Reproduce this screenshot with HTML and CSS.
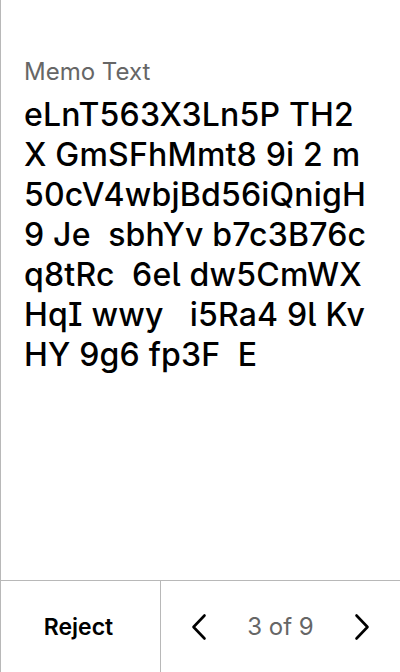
FILE: index.html
```html
<!DOCTYPE html>
<html>
<head>
<meta charset="utf-8">
<link rel="stylesheet" href="styles.css">
</head>
<body>
<div class="screen">
  <main class="content">
    <div class="label">Memo Text</div>
    <div class="memo">eLnT563X3Ln5P TH2 X GmSFhMmt8 9i 2 m 50cV4wbjBd56iQnigH 9 Je  sbhYv b7c3B76c q8tRc  6el dw5CmWX HqI wwy   i5Ra4 9l Kv HY 9g6 fp3F  E</div>
  </main>
  <footer class="bar">
    <div class="reject">Reject</div>
    <div class="pager">
      <span class="chev"><svg width="24" height="28" viewBox="0 0 24 28"><path d="M17.5 2.5 L6.5 14 L17.5 25.5" fill="none" stroke="#000" stroke-width="2.6" stroke-linecap="round" stroke-linejoin="round"/></svg></span>
      <span class="count">3 of 9</span>
      <span class="chev"><svg width="24" height="28" viewBox="0 0 24 28"><path d="M6.5 2.5 L17.5 14 L6.5 25.5" fill="none" stroke="#000" stroke-width="2.6" stroke-linecap="round" stroke-linejoin="round"/></svg></span>
    </div>
  </footer>
</div>
</body>
</html>
```
FILE: styles.css
```css
html, body {
  margin: 0;
  padding: 0;
  background: #fff;
}
.screen {
  width: 400px;
  height: 672px;
  box-sizing: border-box;
  border-left: 1px solid #b8b8b8;
  display: flex;
  flex-direction: column;
  font-family: Inter, "Noto Sans", sans-serif;
  font-feature-settings: "cv05" 1, "cv08" 1;
  color: #000;
}
.content {
  flex: 1;
  padding: 58px 23px 0 23px;
}
.label {
  font-size: 24px;
  line-height: 28px;
  color: #666;
  margin-bottom: 9px;
}
.memo {
  font-size: 32px;
  line-height: 40px;
  white-space: pre-wrap;
  font-weight: 500;
  letter-spacing: 0.2px;
}
.bar {
  height: 92px;
  border-top: 1px solid #b8b8b8;
  display: flex;
  box-sizing: border-box;
}
.reject {
  width: 160px;
  box-sizing: border-box;
  padding-right: 4px;
  border-right: 1px solid #b8b8b8;
  display: flex;
  align-items: center;
  justify-content: center;
  font-size: 23px;
  font-weight: 600;
}
.pager {
  flex: 1;
  display: flex;
  align-items: center;
  justify-content: space-between;
  padding: 0 26px;
}
.chev {
  display: flex;
  width: 24px;
  height: 28px;
}
.count {
  font-size: 24px;
  color: #666;
}
```
